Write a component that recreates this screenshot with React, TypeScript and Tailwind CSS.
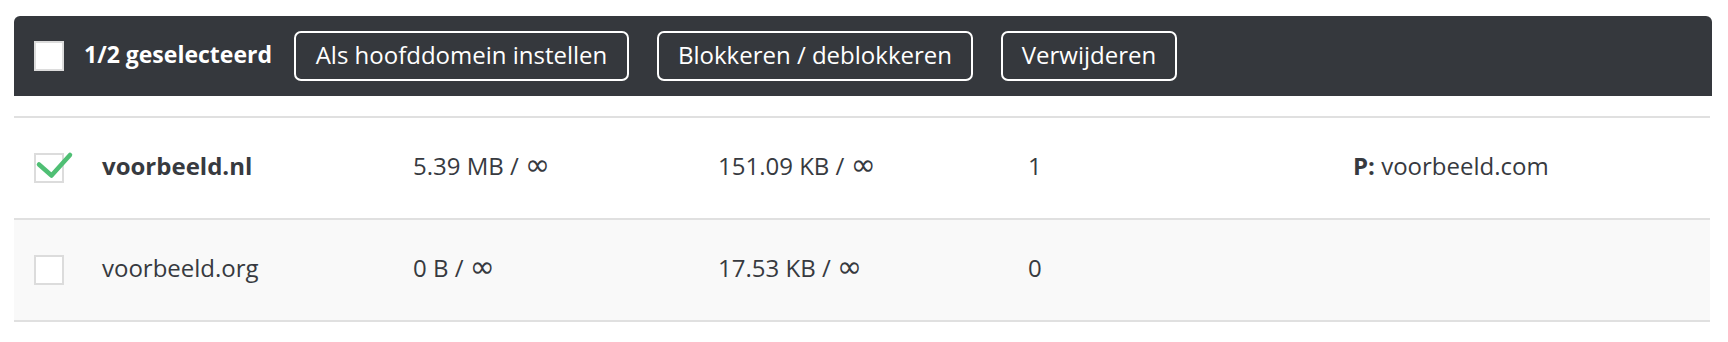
import React from 'react';

interface DomainRow {
  name: string;
  selected: boolean;
  disk: string;
  traffic: string;
  count: string;
  pointer?: string;
}

const rows: DomainRow[] = [
  { name: 'voorbeeld.nl', selected: true, disk: '5.39 MB', traffic: '151.09 KB', count: '1', pointer: 'voorbeeld.com' },
  { name: 'voorbeeld.org', selected: false, disk: '0 B', traffic: '17.53 KB', count: '0' },
];

const Checkbox: React.FC<{ checked?: boolean }> = ({ checked }) => (
  <div className="relative w-[30px] h-[30px] bg-white border-2 border-[#dcdcdc] box-border shrink-0">
    {checked && (
      <svg className="absolute -left-[2px] -top-[2px] overflow-visible" width="40" height="30" viewBox="0 0 40 30">
        <polyline
          points="5,11.5 17.5,22.5 36,2"
          fill="none"
          stroke="#4fbf74"
          strokeWidth="4.5"
          strokeLinecap="round"
          strokeLinejoin="round"
        />
      </svg>
    )}
  </div>
);

// quota value with the big infinity sign
const Quota: React.FC<{ used: string }> = ({ used }) => (
  <span>
    {used} /{' '}
    <span className="text-[30px] leading-[0]" style={{ fontFamily: '"DejaVu Sans ExtraLight", "DejaVu Sans", sans-serif' }}>
      ∞
    </span>
  </span>
);

const ActionButton: React.FC<{ label: string; width: string }> = ({ label, width }) => (
  <button
    className={`${width} h-[50px] border-2 border-white rounded-[7px] text-white text-[24px] leading-none flex items-center justify-center pb-[2px]`}
  >
    {label}
  </button>
);

export default function App() {
  return (
    <div className="pl-[14px] pt-4 bg-white min-h-[342px] text-[#373a3f]" style={{ fontFamily: '"Open Sans", "Noto Sans", sans-serif' }}>
      {/* bulk action bar */}
      <div className="w-[1698px] h-20 bg-[#35383d] rounded-t-[6px] flex items-center pl-5">
        <Checkbox />
        <span className="ml-5 text-white font-bold text-[23px] leading-none pb-[3px]">1/2 geselecteerd</span>
        <div className="ml-[22px] flex items-center gap-[28px]">
          <ActionButton label="Als hoofddomein instellen" width="w-[335px]" />
          <ActionButton label="Blokkeren / deblokkeren" width="w-[316px]" />
          <ActionButton label="Verwijderen" width="w-[176px]" />
        </div>
      </div>

      {/* domain rows */}
      <div className="mt-5 w-[1696px] border-t-2 border-[#e0e0e0]">
        {rows.map((row, i) => (
          <div
            key={row.name}
            className={`grid grid-cols-[88px_311px_305px_310px_325px_1fr] items-center h-[102px] border-b-2 border-[#e0e0e0] text-[24px] ${
              i % 2 === 1 ? 'bg-[#f9f9f9]' : 'bg-white'
            }`}
          >
            <div className="pl-5">
              <Checkbox checked={row.selected} />
            </div>
            <div className={`pb-1 ${row.selected ? 'font-bold' : ''}`}>{row.name}</div>
            <div className="pb-1"><Quota used={row.disk} /></div>
            <div className="pb-1"><Quota used={row.traffic} /></div>
            <div className="pb-1">{row.count}</div>
            <div className="pb-1">
              {row.pointer && (
                <>
                  <span className="font-bold">P:</span> {row.pointer}
                </>
              )}
            </div>
          </div>
        ))}
      </div>
    </div>
  );
}
